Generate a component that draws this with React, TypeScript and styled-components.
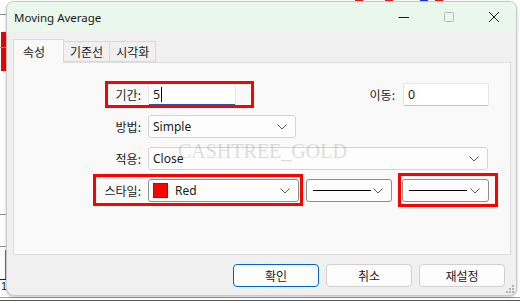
import React from "react";
import styled, { createGlobalStyle } from "styled-components";

const GlobalStyle = createGlobalStyle`
  html, body {
    margin: 0;
    padding: 0;
    background: #ffffff;
  }
  body {
    font-family: "Noto Sans", "Noto Sans CJK KR", sans-serif;
    font-size: 12px;
    color: #1a1a1a;
  }
`;

const Chevron = () => (
  <svg width="10" height="6" viewBox="0 0 10 6">
    <path d="M0.5 0.5 L5 5 L9.5 0.5" fill="none" stroke="#5a5a5a" strokeWidth="1" />
  </svg>
);

const App = (): React.ReactElement => {
  return (
    <Screen>
      <GlobalStyle />
      <ChartBits />
      <Window>
        <TitleBar>
          <Title>Moving Average</Title>
          <Captions>
            <CaptionButton>
              <svg width="12" height="12" viewBox="0 0 12 12">
                <path d="M0.5 6.5 H11" stroke="#1a1a1a" strokeWidth="1" />
              </svg>
            </CaptionButton>
            <CaptionButton>
              <svg width="12" height="12" viewBox="0 0 12 12">
                <rect x="1.5" y="1.5" width="9" height="9" rx="1" fill="none" stroke="#b8b8b8" />
              </svg>
            </CaptionButton>
            <CaptionButton>
              <svg width="12" height="12" viewBox="0 0 12 12">
                <path d="M1 1 L11 11 M11 1 L1 11" stroke="#1a1a1a" strokeWidth="1" />
              </svg>
            </CaptionButton>
          </Captions>
        </TitleBar>

        <Body>
          <Tabs>
            <Tab $active>속성</Tab>
            <Tab>기준선</Tab>
            <Tab>시각화</Tab>
          </Tabs>

          <Panel>
            <Form>
              <Label>기간:</Label>
              <Row>
                <TextInput $focused $width={88}>
                  5<Caret />
                </TextInput>
                <Group>
                  <Label>이동:</Label>
                  <TextInput $width={86}>0</TextInput>
                </Group>
              </Row>

              <Label>방법:</Label>
              <Row>
                <Select $width={148}>
                  <span>Simple</span>
                  <Chevron />
                </Select>
              </Row>

              <Label>적용:</Label>
              <Row>
                <Select $width={340}>
                  <span>Close</span>
                  <Chevron />
                </Select>
              </Row>

              <Label>스타일:</Label>
              <StyleRow>
                <Select $width={151} $dark>
                  <ColorValue>
                    <Swatch $color="#ff0000" />
                    Red
                  </ColorValue>
                  <Chevron />
                </Select>
                <Select $width={86} $dark>
                  <LineSample />
                  <Chevron />
                </Select>
                <Select $width={87} $dark>
                  <LineSample />
                  <Chevron />
                </Select>
              </StyleRow>
            </Form>

            <Watermark>CASHTREE_GOLD</Watermark>
            <Highlight $left={91} $top={18} $width={149} $height={27} />
            <Highlight $left={79} $top={111} $width={210} $height={32} />
            <Highlight $left={384} $top={110} $width={100} $height={34} />
          </Panel>

          <Buttons>
            <Button $primary>확인</Button>
            <Button>취소</Button>
            <Button>재설정</Button>
          </Buttons>
        </Body>
        <Grip>
          <svg width="8" height="8" viewBox="0 0 8 8" fill="#b0b0b0">
            <rect x="6" y="0" width="2" height="2" />
            <rect x="3" y="3" width="2" height="2" />
            <rect x="6" y="3" width="2" height="2" />
            <rect x="0" y="6" width="2" height="2" />
            <rect x="3" y="6" width="2" height="2" />
            <rect x="6" y="6" width="2" height="2" />
          </svg>
        </Grip>
      </Window>
    </Screen>
  );
};

export default App;

// the chart that shows behind the dialog
const ChartBits = () => (
  <>
    <ChartMark $left={355} $top={0} $width={8} $height={2} $color="#e02020" />
    <ChartMark $left={385} $top={0} $width={8} $height={2} $color="#e02020" />
    <ChartMark $left={420} $top={0} $width={8} $height={2} $color="#2030d0" />
    <ChartMark $left={435} $top={0} $width={8} $height={2} $color="#e02020" />
    <ChartMark $left={1} $top={32} $width={5} $height={39} $color="#ee0000" />
    <ChartMark $left={5} $top={250} $width={1} $height={29} $color="#3a9a3a" />
    <ChartMark $left={0} $top={279} $width={6} $height={1} $color="#222" />
    <ChartMark $left={0} $top={297} $width={520} $height={1} $color="#9a9a9a" />
    <ChartMark $left={0} $top={300} $width={520} $height={1} $color="#555" />
    <Dash $top={14} />
    <Dash $top={47} />
    <Dash $top={214} />
    <Dash $top={246} />
    <AxisDigit>1</AxisDigit>
  </>
);

const Screen = styled.div`
  position: relative;
  width: 520px;
  height: 303px;
  overflow: hidden;
  background: #ffffff;
`;

const ChartMark = styled.div<{ $left: number; $top: number; $width: number; $height: number; $color: string }>`
  position: absolute;
  left: ${(p) => p.$left}px;
  top: ${(p) => p.$top}px;
  width: ${(p) => p.$width}px;
  height: ${(p) => p.$height}px;
  background: ${(p) => p.$color};
`;

const Dash = styled.div<{ $top: number }>`
  position: absolute;
  left: 0;
  top: ${(p) => p.$top}px;
  width: 6px;
  border-top: 1px dashed #8090a8;
`;

const AxisDigit = styled.div`
  position: absolute;
  left: 1px;
  top: 280px;
  font-family: "Liberation Sans", sans-serif;
  font-size: 11px;
  color: #222;
`;

const Window = styled.div`
  position: absolute;
  left: 6px;
  top: 1px;
  width: 511px;
  height: 295px;
  box-sizing: border-box;
  display: flex;
  flex-direction: column;
  background: #f0f0f0;
  border: 1px solid #c9c9c9;
  border-radius: 8px;
  box-shadow: 0 1px 3px rgba(0, 0, 0, 0.25);
  overflow: hidden;
`;

const TitleBar = styled.div`
  height: 30px;
  flex: none;
  display: flex;
  align-items: center;
  justify-content: space-between;
  background: #e9f7ed;
  padding-left: 7px;
`;

const Title = styled.div`
  font-size: 11.5px;
  color: #1a1a1a;
`;

const Captions = styled.div`
  display: flex;
  height: 100%;
`;

const CaptionButton = styled.div`
  width: 45px;
  height: 100%;
  display: flex;
  align-items: center;
  justify-content: center;
`;

const Body = styled.div`
  flex: 1;
  display: flex;
  flex-direction: column;
  padding: 7px 5px 0 6px;
`;

const Tabs = styled.div`
  display: flex;
  align-items: flex-end;
  height: 23px;
  position: relative;
  z-index: 1;
`;

const Tab = styled.div<{ $active?: boolean }>`
  box-sizing: border-box;
  height: ${(p) => (p.$active ? 24 : 21)}px;
  margin-bottom: ${(p) => (p.$active ? -1 : 0)}px;
  min-width: ${(p) => (p.$active ? 51 : 0)}px;
  padding: 0 ${(p) => (p.$active ? 9 : 6)}px;
  display: flex;
  align-items: center;
  background: ${(p) => (p.$active ? "#f9f9f9" : "#f0f0f0")};
  border: 1px solid #d9d9d9;
  border-bottom: ${(p) => (p.$active ? "none" : "1px solid #d9d9d9")};
  margin-right: -1px;
  font-family: "Noto Sans CJK KR", sans-serif;
  font-size: 12px;
  color: #1a1a1a;
`;

const Panel = styled.div`
  position: relative;
  height: 193px;
  box-sizing: border-box;
  background: #f9f9f9;
  border: 1px solid #dedede;
`;

const Form = styled.div`
  display: grid;
  grid-template-columns: 127px 1fr;
  grid-auto-rows: 23px;
  column-gap: 7px;
  row-gap: 9px;
  padding: 20px 21px 0 0;
`;

const Label = styled.div`
  display: flex;
  align-items: center;
  justify-content: flex-end;
  font-family: "Noto Sans CJK KR", sans-serif;
  font-size: 12px;
  color: #1a1a1a;
`;

const Row = styled.div`
  display: flex;
  align-items: center;
  justify-content: space-between;
`;

const Group = styled.div`
  display: flex;
  align-items: center;
  gap: 8px;
  height: 100%;
`;

const StyleRow = styled.div`
  display: flex;
  align-items: center;
  gap: 7px;

  & > :last-child {
    margin-left: 3px;
  }
`;

const TextInput = styled.div<{ $width: number; $focused?: boolean }>`
  box-sizing: border-box;
  width: ${(p) => p.$width}px;
  height: 23px;
  display: flex;
  align-items: center;
  padding-left: 4px;
  background: #ffffff;
  border: 1px solid #e6e6e6;
  border-bottom: ${(p) => (p.$focused ? "2px solid #2657a8" : "1px solid #c4c4c4")};
  border-radius: 2px;
  font-size: 12.5px;
  color: #1a1a1a;
`;

const Caret = styled.span`
  display: inline-block;
  width: 1px;
  height: 15px;
  margin-left: 1px;
  background: #000;
`;

const Select = styled.div<{ $width: number; $dark?: boolean }>`
  box-sizing: border-box;
  width: ${(p) => p.$width}px;
  height: 23px;
  display: flex;
  align-items: center;
  justify-content: space-between;
  padding: 0 8px 0 4px;
  background: #fdfdfd;
  border: 1px solid ${(p) => (p.$dark ? "#8e8e8e" : "#d3d3d3")};
  border-radius: 3px;
  font-size: 12px;
  color: #1a1a1a;
`;

const ColorValue = styled.div`
  display: flex;
  align-items: center;
  gap: 7px;
`;

const Swatch = styled.span<{ $color: string }>`
  width: 15px;
  height: 15px;
  box-sizing: border-box;
  background: ${(p) => p.$color};
  border: 1px solid #cc0000;
`;

const LineSample = styled.span`
  width: 58px;
  height: 1px;
  margin-left: 2px;
  background: #000;
`;

const Watermark = styled.div`
  position: absolute;
  left: 164px;
  top: 78px;
  font-family: "Liberation Serif", serif;
  font-size: 20px;
  line-height: 20px;
  color: rgba(120, 120, 120, 0.25);
  pointer-events: none;
`;

const Highlight = styled.div<{ $left: number; $top: number; $width: number; $height: number }>`
  position: absolute;
  left: ${(p) => p.$left}px;
  top: ${(p) => p.$top}px;
  width: ${(p) => p.$width}px;
  height: ${(p) => p.$height}px;
  box-sizing: border-box;
  border: 3px solid #ff0000;
  pointer-events: none;
`;

const Buttons = styled.div`
  display: flex;
  justify-content: flex-end;
  gap: 7px;
  padding: 9px 6px 0 0;
`;

const Button = styled.div<{ $primary?: boolean }>`
  box-sizing: border-box;
  width: 86px;
  height: 23px;
  display: flex;
  align-items: center;
  justify-content: center;
  background: #fdfdfd;
  border: 1px solid ${(p) => (p.$primary ? "#0067c0" : "#d0d0d0")};
  border-radius: 4px;
  font-family: "Noto Sans CJK KR", sans-serif;
  font-size: 12px;
  color: #1a1a1a;
`;

const Grip = styled.div`
  position: absolute;
  right: 2px;
  bottom: 2px;
  line-height: 0;
`;
